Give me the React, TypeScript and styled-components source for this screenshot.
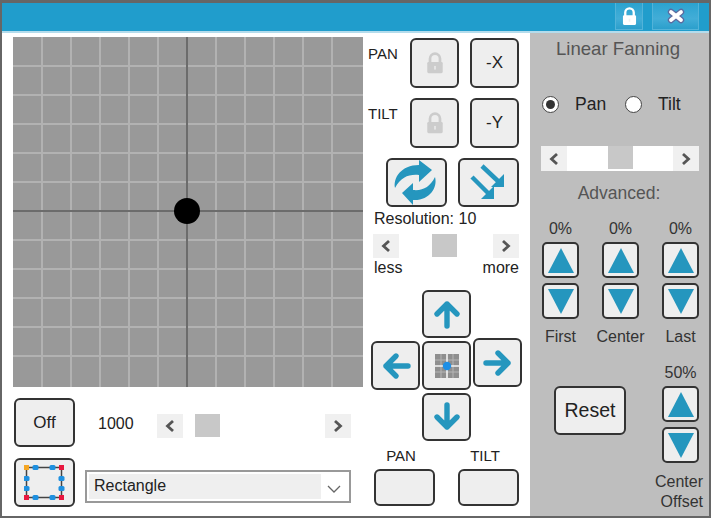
import React from 'react';
import styled, { createGlobalStyle } from 'styled-components';

const Global = createGlobalStyle`
  html, body { margin: 0; padding: 0; background: #fff; }
  body { width: 711px; height: 518px; overflow: hidden; font-family: "Liberation Sans", Arial, sans-serif; }
  * { box-sizing: border-box; }
`;

const BLUE = '#2596be';

const Frame = styled.div`
  width: 711px; height: 518px; display: flex; flex-direction: column;
  border: 2px solid #666; border-top-width: 3px; background: #fff; color: #222;
`;
const TitleBar = styled.div`
  height: 30px; flex: none; display: flex; justify-content: flex-end; align-items: flex-start;
  background: #209dcc; border-bottom: 2px solid #b4dcec; padding-right: 10px; gap: 9px;
`;
const TitleButton = styled.div<{ $w: number }>`
  width: ${p => p.$w}px; height: 27px; display: flex; align-items: center; justify-content: center;
  background: linear-gradient(#2ba3d0, #42add7 60%, #2b9fcc); border: 1px solid #52b3d9; border-top: 0;
`;
const Body = styled.div`flex: 1; display: flex; min-height: 0;`;

const LeftColumn = styled.div`width: 361px; flex: none; padding: 4px 0 0 11px; display: flex; flex-direction: column;`;
const CanvasBox = styled.div`width: 350px; height: 350px; background: #999; flex: none;`;
const ControlRow = styled.div`display: flex; align-items: flex-start; margin-top: 11px; padding-left: 1px;`;

const Btn = styled.div<{ $w?: number; $h?: number }>`
  width: ${p => p.$w ?? 49}px; height: ${p => p.$h ?? 49}px; flex: none;
  display: flex; align-items: center; justify-content: center;
  background: #eee; border: 2px solid #333; border-radius: 6px;
  font-size: 17px; color: #222;
`;
const ValueText = styled.div`width: 82px; padding: 17px 0 0 23px; font-size: 16px; line-height: 18px;`;

const Scroll = styled.div<{ $w: number; $track?: string; $h?: number }>`
  width: ${p => p.$w}px; height: ${p => p.$h ?? 24}px; flex: none; display: flex; align-items: flex-start;
  background: ${p => p.$track ?? 'transparent'};
`;
const ScrollEnd = styled.div<{ $h?: number }>`
  width: 26px; height: ${p => p.$h ?? 24}px; flex: none; background: #f0f0f0; display: flex; align-items: center; justify-content: center;
`;
const ScrollThumb = styled.div<{ $left: number; $w?: number }>`
  margin-left: ${p => p.$left}px; width: ${p => p.$w ?? 25}px; height: 23px; flex: none; background: #c8c8c8;
`;
const Spacer = styled.div`flex: 1;`;

const OffsetScroll = styled.div`margin-top: 16px;`;
const SelectBox = styled.div`
  margin: 12px 0 0 10px; width: 266px; height: 33px; flex: none; border: 2px solid #999; background: #fff;
  padding: 2px; display: flex; align-items: stretch;
`;
const SelectValue = styled.div`width: 232px; background: #efefef; font-size: 16px; line-height: 23px; padding-left: 5px;`;
const SelectArrow = styled.div`flex: 1; display: flex; align-items: center; justify-content: center; padding-top: 4px;`;

const MiddleColumn = styled.div`width: 167px; flex: none; padding: 5px 0 0 5px; display: flex; flex-direction: column;`;
const AxisRow = styled.div`
  display: grid; grid-template-columns: 31px 49px 49px; column-gap: 11px; height: 50px; margin-bottom: 10px;
`;
const AxisLabel = styled.div`font-size: 15px; line-height: 18px; padding-top: 7px; white-space: nowrap;`;
const ActionRow = styled.div`display: flex; gap: 11px; padding-left: 18px;`;
const ResolutionLabel = styled.div`font-size: 16px; line-height: 18px; margin: 3px 0 0 6px;`;
const ResolutionScroll = styled.div`margin: 6px 0 0 5px;`;
const EndLabels = styled.div`
  width: 146px; margin: 1px 0 0 5px; padding-left: 1px; display: flex; justify-content: space-between; font-size: 16px; line-height: 18px;
`;
const Dpad = styled.div`
  margin: 13px 0 0 3px; display: grid; grid-template-columns: 49px 49px 49px; grid-template-rows: 48px 49px 48px;
  column-gap: 2px; row-gap: 3px; width: 151px;
`;
const DpadCell = styled(Btn)<{ $col: number; $row: number; $lift?: number }>`
  grid-column: ${p => p.$col}; grid-row: ${p => p.$row}; height: ${p => (p.$row === 2 ? 49 : 48)}px;
  margin-top: ${p => -(p.$lift ?? 0)}px;
`;
const FooterGrid = styled.div`
  margin: 6px 0 0 6px; display: grid; grid-template-columns: 61px 61px; column-gap: 23px; row-gap: 4px; justify-items: center;
`;
const FooterLabel = styled.div`font-size: 15px; line-height: 18px; padding-right: 7px;`;

const RightPanel = styled.div`
  flex: 1; background: #bebebe; padding: 0; display: flex; flex-direction: column; color: #333;
`;
const PanelTitle = styled.div`
  font-size: 18.6px; line-height: 20px; text-align: center; color: #555; margin-top: 6px; padding-right: 3px; white-space: nowrap;
`;
const RadioRow = styled.div`display: flex; align-items: center; margin: 33px 0 0 12px; font-size: 17.5px; height: 24px; color: #222;`;
const Radio = styled.div<{ $on?: boolean }>`
  width: 17px; height: 17px; border-radius: 50%; flex: none; background: #fff; border: 1.5px solid #444;
  display: flex; align-items: center; justify-content: center;
  &::after { content: ''; width: 9px; height: 9px; border-radius: 50%; background: ${p => (p.$on ? '#333' : 'transparent')}; }
`;
const RadioText = styled.div<{ $w: number }>`width: ${p => p.$w}px; padding-left: 16px; flex: none;`;
const FanScroll = styled.div`margin: 30px 0 0 11px;`;
const AdvancedLabel = styled.div`font-size: 17.5px; line-height: 20px; text-align: center; color: #555; margin-top: 12px; padding-right: 1px;`;
const SpinnerGrid = styled.div`
  margin: 17px 0 0 12px; display: grid; grid-template-columns: 37px 37px 37px; column-gap: 23px;
`;
const SpinnerCol = styled.div`display: flex; flex-direction: column; align-items: center; width: 37px;`;
const Percent = styled.div`font-size: 16px; line-height: 18px; height: 22px; white-space: nowrap;`;
const Spin = styled(Btn)`width: 37px; height: 36px; margin-bottom: 5px; border-radius: 5px;`;
const SpinLabel = styled.div`font-size: 16px; line-height: 18px; margin-top: 4px; white-space: nowrap;`;
const LowerRow = styled.div`display: flex; margin: 18px 0 0 24px; align-items: flex-start;`;
const ResetBtn = styled(Btn)`width: 72px; margin-top: 22px; font-size: 19.5px;`;
const OffsetCol = styled(SpinnerCol)`margin-left: 36px;`;
const OffsetLabel = styled.div`
  width: 70px; margin: 4px 0 0 106px; text-align: right; font-size: 16px; line-height: 20px; padding-right: 3px;
`;

const Chevron = ({ dir }: { dir: 'l' | 'r' }) => (
  <svg width="12" height="14" viewBox="0 0 12 14">
    <path d={dir === 'l' ? 'M9 2 L3.5 7 L9 12' : 'M3 2 L8.5 7 L3 12'} fill="none" stroke="#555" strokeWidth="2.8" />
  </svg>
);

const LockIcon = ({ color, w = 20 }: { color: string; w?: number }) => (
  <svg width={w} height={w * 1.18} viewBox="0 0 22 26">
    <path d="M5.5 13 V8.5 a5.5 5.5 0 0 1 11 0 V13" fill="none" stroke={color} strokeWidth="3" />
    <rect x="2.5" y="12" width="17" height="12.5" rx="1.5" fill={color} />
    <rect x="10" y="16.5" width="2" height="4" fill="#eee" opacity=".8" />
  </svg>
);

const CloseIcon = () => (
  <svg width="20" height="16" viewBox="0 0 20 16">
    <path d="M5 4 L15 12 M15 4 L5 12" stroke="#5c6aa0" strokeWidth="6.4" strokeLinecap="round" />
    <path d="M5 4 L15 12 M15 4 L5 12" stroke="#fff" strokeWidth="3.8" strokeLinecap="round" />
  </svg>
);

const DirArrow = ({ rot }: { rot: number }) => (
  <svg width="30" height="30" viewBox="0 0 30 30" style={{ transform: `rotate(${rot}deg)` }}>
    <path d="M15 27 V5 M5 15 L15 5 L25 15" fill="none" stroke={BLUE} strokeWidth="5.4" strokeLinecap="round" strokeLinejoin="round" />
  </svg>
);

const Triangle = ({ down }: { down?: boolean }) => (
  <svg width="28" height="27" viewBox="0 0 28 27">
    <path d={down ? 'M1 1 H27 L14 26 Z' : 'M14 1 L27 26 H1 Z'} fill={BLUE} />
  </svg>
);

const SwapIcon = () => (
  <svg width="56" height="46" viewBox="0 0 56 46">
    <g fill={BLUE}>
      <path d="M6 28 C4 18 12 5 30 5 V0 L43 10 L30 22 V15 C20 14 12 17 6 28 Z" />
      <path d="M46 17 C49 28 40 41 24 40 V45 L13 33 L24 23 V30 C34 31 41 27 46 17 Z" />
    </g>
  </svg>
);

const DiagonalIcon = () => (
  <svg width="44" height="40" viewBox="0 0 44 40">
    <g stroke={BLUE} strokeWidth="4.5" fill="none">
      <path d="M15 3 L33 20" />
      <path d="M5 14 L23 32" />
    </g>
    <g fill={BLUE}>
      <path d="M37 11 V24 H24 Z" />
      <path d="M27 23 V36 H14 Z" />
    </g>
  </svg>
);

const GridDot = () => (
  <svg width="24" height="24" viewBox="0 0 24 24">
    <rect width="24" height="24" fill="#8f8f8f" />
    <path d="M6 0 V24 M18 0 V24 M0 6 H24 M0 18 H24" stroke="#b5b5b5" strokeWidth="1" />
    <path d="M12 0 V24 M0 12 H24" stroke="#f4f4f4" strokeWidth="1.6" />
    <circle cx="12" cy="12" r="4.2" fill="#1e8fe6" />
  </svg>
);

const RectShape = () => {
  const blue = [[11.5, 2.5], [28.5, 2.5], [2.5, 13.5], [2.5, 23.5], [37.5, 13.5], [37.5, 23.5], [11.5, 32.5], [28.5, 32.5]];
  return (
    <svg width="42" height="36" viewBox="0 0 42 36">
      <rect x="2.5" y="2.5" width="35" height="30" fill="none" stroke="#444" strokeWidth="1.5" />
      {blue.map(([x, y]) => <rect key={`${x}-${y}`} x={x - 3} y={y - 2.5} width="6" height="5" rx="1.5" fill="#1e90e0" />)}
      <rect x="0" y="0" width="5" height="5" fill="#f5a623" />
      <rect x="35" y="0" width="5" height="5" fill="#e8173f" />
      <rect x="0" y="30" width="5" height="5" fill="#e8173f" />
      <rect x="35" y="30" width="5" height="5" fill="#e8173f" />
    </svg>
  );
};

const Pad = () => {
  const lines = Array.from({ length: 11 }, (_, i) => 29 + i * 29);
  return (
    <svg width="350" height="350" viewBox="0 0 350 350" style={{ display: 'block' }}>
      <rect width="350" height="350" fill="#999" />
      {lines.map(v => (
        <g key={v} stroke="#b2b2b2" strokeWidth="2">
          <line x1={v} y1="0" x2={v} y2="350" />
          <line x1="0" y1={v} x2="350" y2={v} />
        </g>
      ))}
      <line x1="174" y1="0" x2="174" y2="350" stroke="#555" strokeWidth="1.5" />
      <line x1="0" y1="174" x2="350" y2="174" stroke="#555" strokeWidth="1.5" />
      <circle cx="174" cy="174" r="13" fill="#000" />
    </svg>
  );
};

const Spinner = ({ value, label }: { value: string; label: string }) => (
  <SpinnerCol>
    <Percent>{value}</Percent>
    <Spin><Triangle /></Spin>
    <Spin><Triangle down /></Spin>
    <SpinLabel>{label}</SpinLabel>
  </SpinnerCol>
);

export default function App() {
  return (
    <>
      <Global />
      <Frame>
        <TitleBar>
          <TitleButton $w={28}><LockIcon color="#fff" w={17} /></TitleButton>
          <TitleButton $w={47}><CloseIcon /></TitleButton>
        </TitleBar>
        <Body>
          <LeftColumn>
            <CanvasBox><Pad /></CanvasBox>
            <ControlRow>
              <Btn $w={61}>Off</Btn>
              <ValueText>1000</ValueText>
              <OffsetScroll>
                <Scroll $w={194}>
                  <ScrollEnd><Chevron dir="l" /></ScrollEnd>
                  <ScrollThumb $left={12} />
                  <Spacer />
                  <ScrollEnd><Chevron dir="r" /></ScrollEnd>
                </Scroll>
              </OffsetScroll>
            </ControlRow>
            <ControlRow>
              <Btn $w={61}><RectShape /></Btn>
              <SelectBox>
                <SelectValue>Rectangle</SelectValue>
                <SelectArrow>
                  <svg width="14" height="8" viewBox="0 0 14 8"><path d="M1 1 L7 7 L13 1" fill="none" stroke="#666" strokeWidth="1.3" /></svg>
                </SelectArrow>
              </SelectBox>
            </ControlRow>
          </LeftColumn>

          <MiddleColumn>
            <AxisRow>
              <AxisLabel>PAN</AxisLabel>
              <Btn $h={50}><LockIcon color="#ccc" /></Btn>
              <Btn $h={50}>-X</Btn>
            </AxisRow>
            <AxisRow>
              <AxisLabel>TILT</AxisLabel>
              <Btn $h={50}><LockIcon color="#ccc" /></Btn>
              <Btn $h={50}>-Y</Btn>
            </AxisRow>
            <ActionRow>
              <Btn $w={61}><SwapIcon /></Btn>
              <Btn $w={61}><DiagonalIcon /></Btn>
            </ActionRow>
            <ResolutionLabel>Resolution: 10</ResolutionLabel>
            <ResolutionScroll>
              <Scroll $w={146}>
                <ScrollEnd><Chevron dir="l" /></ScrollEnd>
                <ScrollThumb $left={33} />
                <Spacer />
                <ScrollEnd><Chevron dir="r" /></ScrollEnd>
              </Scroll>
            </ResolutionScroll>
            <EndLabels><span>less</span><span>more</span></EndLabels>
            <Dpad>
              <DpadCell $col={2} $row={1}><DirArrow rot={0} /></DpadCell>
              <DpadCell $col={1} $row={2}><DirArrow rot={-90} /></DpadCell>
              <DpadCell $col={2} $row={2}><GridDot /></DpadCell>
              <DpadCell $col={3} $row={2} $lift={3}><DirArrow rot={90} /></DpadCell>
              <DpadCell $col={2} $row={3}><DirArrow rot={180} /></DpadCell>
            </Dpad>
            <FooterGrid>
              <FooterLabel>PAN</FooterLabel>
              <FooterLabel>TILT</FooterLabel>
              <Btn $w={61} $h={37} />
              <Btn $w={61} $h={37} />
            </FooterGrid>
          </MiddleColumn>

          <RightPanel>
            <PanelTitle>Linear Fanning</PanelTitle>
            <RadioRow>
              <Radio $on />
              <RadioText $w={66}>Pan</RadioText>
              <Radio />
              <RadioText $w={60}>Tilt</RadioText>
            </RadioRow>
            <FanScroll>
              <Scroll $w={158} $h={25} $track="#fff">
                <ScrollEnd $h={25}><Chevron dir="l" /></ScrollEnd>
                <ScrollThumb $left={41} />
                <Spacer />
                <ScrollEnd $h={25}><Chevron dir="r" /></ScrollEnd>
              </Scroll>
            </FanScroll>
            <AdvancedLabel>Advanced:</AdvancedLabel>
            <SpinnerGrid>
              <Spinner value="0%" label="First" />
              <Spinner value="0%" label="Center" />
              <Spinner value="0%" label="Last" />
            </SpinnerGrid>
            <LowerRow>
              <ResetBtn>Reset</ResetBtn>
              <OffsetCol>
                <Percent>50%</Percent>
                <Spin><Triangle /></Spin>
                <Spin><Triangle down /></Spin>
              </OffsetCol>
            </LowerRow>
            <OffsetLabel>Center<br />Offset</OffsetLabel>
          </RightPanel>
        </Body>
      </Frame>
    </>
  );
}
